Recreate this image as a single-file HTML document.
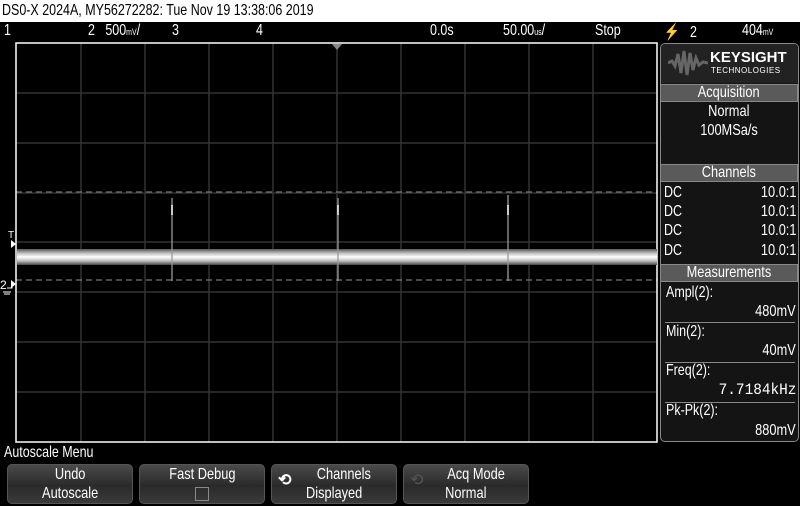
<!DOCTYPE html>
<html><head><meta charset="utf-8"><style>
*{margin:0;padding:0;box-sizing:border-box}
body{width:800px;height:503px;background:#000;position:relative;overflow:hidden;font-family:"Liberation Sans",sans-serif;color:#fff}
.t{position:absolute;font-size:16px;transform:scaleX(.78);transform-origin:left top;white-space:nowrap}
#title{position:absolute;left:0;top:0;width:800px;height:22px;background:#fff;color:#000}
.hdr{position:absolute;left:660px;width:138px;height:18px;background:#5a5a5a;border:1px solid #888;text-align:center;font-size:16px;line-height:16px}
.hdr span,.c span{display:inline-block;transform:scaleX(.8)}
.btn{position:absolute;top:464px;width:126px;height:40px;border-radius:5px;border:1px solid #555;background:linear-gradient(#4a4a4a,#2a2a2a 55%,#3a3a3a);text-align:center;font-size:16px;line-height:19px}
.btn span{display:inline-block;transform:scaleX(.8)}
.r{position:absolute;right:4px;font-size:16px;transform:scaleX(.8);transform-origin:right top;white-space:nowrap}
.c{position:absolute;left:660px;width:138px;text-align:center;font-size:16px}
</style></head><body>
<div id="title"><div class="t" style="left:2px;top:2px;color:#000">DS0-X 2024A, MY56272282: Tue Nov 19 13:38:06 2019</div></div>
<div class="t" style="left:4px;top:22px">1</div>
<div class="t" style="left:88px;top:22px">2 &nbsp;&nbsp;500<small style="font-size:9px">mV</small>/</div>
<div class="t" style="left:172px;top:22px">3</div>
<div class="t" style="left:256px;top:22px">4</div>
<div class="t" style="left:430px;top:22px">0.0s</div>
<div class="t" style="left:503px;top:22px">50.00<small style="font-size:9px">us</small>/</div>
<div class="t" style="left:595px;top:22px">Stop</div>
<div class="t" style="left:664px;top:22px">⚡ &nbsp;&nbsp;2</div>
<div class="t" style="left:742px;top:22px">404<small style="font-size:9px">mV</small></div>
<svg style="position:absolute;left:0;top:0" width="800" height="503">
<defs><linearGradient id="g" x1="0" y1="0" x2="0" y2="1"><stop offset="0" stop-color="#555"/><stop offset=".25" stop-color="#bbb"/><stop offset=".5" stop-color="#fff"/><stop offset=".75" stop-color="#bbb"/><stop offset="1" stop-color="#444"/></linearGradient></defs>
<g stroke="#333" stroke-width="1.5">
<line x1="81" y1="43" x2="81" y2="442"/><line x1="145" y1="43" x2="145" y2="442"/><line x1="209" y1="43" x2="209" y2="442"/><line x1="273" y1="43" x2="273" y2="442"/><line x1="337" y1="43" x2="337" y2="442"/><line x1="401" y1="43" x2="401" y2="442"/><line x1="465" y1="43" x2="465" y2="442"/><line x1="529" y1="43" x2="529" y2="442"/><line x1="593" y1="43" x2="593" y2="442"/>
<line x1="16" y1="93" x2="657" y2="93"/><line x1="16" y1="143" x2="657" y2="143"/><line x1="16" y1="193" x2="657" y2="193"/><line x1="16" y1="242" x2="657" y2="242"/><line x1="16" y1="292" x2="657" y2="292"/><line x1="16" y1="342" x2="657" y2="342"/><line x1="16" y1="392" x2="657" y2="392"/>
</g>
<g stroke="#777" stroke-width="1.2" stroke-dasharray="6,4"><line x1="16" y1="192" x2="657" y2="192"/><line x1="16" y1="280" x2="657" y2="280"/></g>
<rect x="16" y="43" width="641" height="399" fill="none" stroke="#fff" stroke-width="1.5"/>
<polygon points="332,44 342,44 337,50" fill="#888"/>
<rect x="17" y="249" width="640" height="16" fill="url(#g)"/>
<g stroke="#999" stroke-width="1.3"><line x1="172" y1="198" x2="172" y2="281"/><line x1="338" y1="198" x2="338" y2="281"/><line x1="508" y1="195" x2="508" y2="281"/></g>
<g stroke="#fff" stroke-width="1.5"><line x1="172" y1="205" x2="172" y2="215"/><line x1="338" y1="205" x2="338" y2="215"/><line x1="508" y1="205" x2="508" y2="215"/></g>
<text x="8" y="238" fill="#fff" font-size="10">T</text>
<polygon points="11,240 16,244 11,248" fill="#fff"/>
<text x="0" y="289" fill="#fff" font-size="12">2</text>
<polygon points="11,280 16,284 11,288" fill="#fff"/>
<path d="M7,288h5v-4M3,292h8M4,294h6" stroke="#fff" fill="none"/>
</svg>
<div style="position:absolute;left:660px;top:43px;width:139px;height:399px;border:1px solid #888;border-radius:5px;background:#141414"></div>
<div style="position:absolute;left:661px;top:44px;width:137px;height:39px;background:#222;border-radius:4px 4px 0 0"></div>
<svg style="position:absolute;left:668px;top:48px" width="40" height="30"><path d="M0,15 L4,13 L7,18 L10,6 L13,25 L16,3 L19,27 L22,5 L25,22 L28,10 L31,17 L35,14 L40,15" stroke="#666" stroke-width="3" fill="none"/></svg>
<div style="position:absolute;left:710px;top:49px;font-size:15px;font-weight:bold">KEYSIGHT</div>
<div style="position:absolute;left:711px;top:66px;font-size:8px;letter-spacing:.5px">TECHNOLOGIES</div>
<div class="hdr" style="top:84px"><span>Acquisition</span></div>
<div class="c" style="top:103px"><span>Normal</span></div>
<div class="c" style="top:122px"><span>100MSa/s</span></div>
<div class="hdr" style="top:164px"><span>Channels</span></div>
<div class="t" style="left:664px;top:184px">DC</div><div class="r" style="top:184px">10.0:1</div>
<div class="t" style="left:664px;top:203px">DC</div><div class="r" style="top:203px">10.0:1</div>
<div class="t" style="left:664px;top:222px">DC</div><div class="r" style="top:222px">10.0:1</div>
<div class="t" style="left:664px;top:242px">DC</div><div class="r" style="top:242px">10.0:1</div>
<div class="hdr" style="top:264px"><span>Measurements</span></div>
<div class="t" style="left:666px;top:284px">Ampl(2):</div><div class="r" style="top:303px">480mV</div>
<div style="position:absolute;left:665px;top:322px;width:130px;height:1px;background:#888"></div>
<div class="t" style="left:666px;top:323px">Min(2):</div><div class="r" style="top:342px">40mV</div>
<div style="position:absolute;left:665px;top:362px;width:130px;height:1px;background:#888"></div>
<div class="t" style="left:666px;top:362px">Freq(2):</div><div class="r" style="top:381px;font-family:'Liberation Mono',monospace;transform:scaleX(.9)">7.7184kHz</div>
<div style="position:absolute;left:665px;top:402px;width:130px;height:1px;background:#888"></div>
<div class="t" style="left:666px;top:402px">Pk-Pk(2):</div><div class="r" style="top:422px">880mV</div>
<div class="t" style="left:4px;top:444px">Autoscale Menu</div>
<div class="btn" style="left:7px"><span>Undo</span><br><span>Autoscale</span></div>
<div class="btn" style="left:139px"><span>Fast Debug</span><br><span style="display:inline-block;width:14px;height:14px;border:1px solid #888;margin-top:3px;transform:none"></span></div>
<div class="btn" style="left:271px"><span style="margin-left:20px">Channels</span><br><span>Displayed</span><div style="position:absolute;left:6px;top:6px;font-size:16px;font-weight:bold">⟲</div></div>
<div class="btn" style="left:403px"><span style="margin-left:20px">Acq Mode</span><br><span>Normal</span><div style="position:absolute;left:6px;top:6px;font-size:16px;color:#555">⟲</div></div>
</body></html>
